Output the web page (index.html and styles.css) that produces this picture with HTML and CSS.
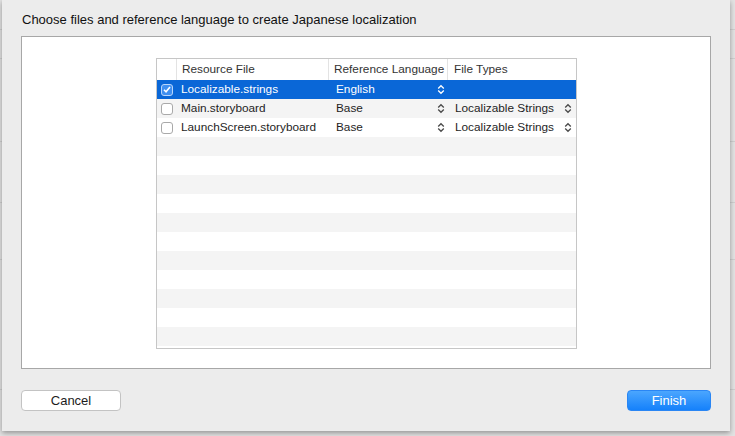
FILE: index.html
```html
<!DOCTYPE html>
<html>
<head>
<meta charset="utf-8">
<link rel="stylesheet" href="styles.css">
</head>
<body>
<div class="sheet">
  <div class="title">Choose files and reference language to create Japanese localization</div>
  <div class="panel">
    <div class="table">
      <div class="thead">
        <div class="th"></div>
        <div class="th">Resource File</div>
        <div class="th">Reference Language</div>
        <div class="th">File Types</div>
      </div>
      <div class="tbody">
        <div class="row selected">
          <div class="cell cb"><span class="check on"><svg width="8" height="7" viewBox="0 0 8 7"><path d="M1 3.8 L3 5.8 L7 1" fill="none" stroke="#fff" stroke-width="1.6"/></svg></span></div>
          <div class="cell name">Localizable.strings</div>
          <div class="cell pop">English<svg class="chev" width="8" height="11" viewBox="0 0 8 11"><path d="M1.2 4.5 L4 1.7 L6.8 4.5 M1.2 6.5 L4 9.3 L6.8 6.5" fill="none" stroke="currentColor" stroke-width="1.3"/></svg></div>
          <div class="cell pop"></div>
        </div>
        <div class="row">
          <div class="cell cb"><span class="check"></span></div>
          <div class="cell name">Main.storyboard</div>
          <div class="cell pop">Base<svg class="chev" width="8" height="11" viewBox="0 0 8 11"><path d="M1.2 4.5 L4 1.7 L6.8 4.5 M1.2 6.5 L4 9.3 L6.8 6.5" fill="none" stroke="currentColor" stroke-width="1.3"/></svg></div>
          <div class="cell pop">Localizable Strings<svg class="chev" width="8" height="11" viewBox="0 0 8 11"><path d="M1.2 4.5 L4 1.7 L6.8 4.5 M1.2 6.5 L4 9.3 L6.8 6.5" fill="none" stroke="currentColor" stroke-width="1.3"/></svg></div>
        </div>
        <div class="row">
          <div class="cell cb"><span class="check"></span></div>
          <div class="cell name">LaunchScreen.storyboard</div>
          <div class="cell pop">Base<svg class="chev" width="8" height="11" viewBox="0 0 8 11"><path d="M1.2 4.5 L4 1.7 L6.8 4.5 M1.2 6.5 L4 9.3 L6.8 6.5" fill="none" stroke="currentColor" stroke-width="1.3"/></svg></div>
          <div class="cell pop">Localizable Strings<svg class="chev" width="8" height="11" viewBox="0 0 8 11"><path d="M1.2 4.5 L4 1.7 L6.8 4.5 M1.2 6.5 L4 9.3 L6.8 6.5" fill="none" stroke="currentColor" stroke-width="1.3"/></svg></div>
        </div>
        <div class="row"></div>
        <div class="row"></div>
        <div class="row"></div>
        <div class="row"></div>
        <div class="row"></div>
        <div class="row"></div>
        <div class="row"></div>
        <div class="row"></div>
        <div class="row"></div>
        <div class="row"></div>
        <div class="row"></div>
        <div class="row"></div>
      </div>
    </div>
  </div>
  <div class="buttons">
    <button class="btn cancel">Cancel</button>
    <button class="btn finish">Finish</button>
  </div>
</div>
</body>
</html>
```

FILE: styles.css
```css
html, body {
  margin: 0;
  padding: 0;
}
body {
  width: 735px;
  height: 436px;
  overflow: hidden;
  font-family: "Liberation Sans", Arial, sans-serif;
  background-color: #e2e2e2;
  background-image:
    linear-gradient(#cfcfcf, #cfcfcf),
    linear-gradient(#cfcfcf, #cfcfcf),
    linear-gradient(#cfcfcf, #cfcfcf),
    linear-gradient(#cfcfcf, #cfcfcf),
    linear-gradient(#cfcfcf, #cfcfcf),
    linear-gradient(#cfcfcf, #cfcfcf);
  background-size: 100% 1px;
  background-repeat: no-repeat;
  background-position: 0 29px, 0 58px, 0 141px, 0 202px, 0 259px, 0 389px;
}
.sheet {
  margin-left: 2px;
  width: 728px;
  height: 431px;
  background: #ececec;
  box-shadow: 0 2px 5px rgba(0, 0, 0, 0.35);
  display: flex;
  flex-direction: column;
  padding: 0 19px;
  box-sizing: border-box;
}
.title {
  font-size: 13px;
  line-height: 16px;
  color: #111;
  padding: 12px 0 8px 1px;
}
.panel {
  height: 333px;
  box-sizing: border-box;
  border: 1px solid #a7a7a7;
  background: #fff;
  display: flex;
  justify-content: center;
  padding-top: 21px;
}
.table {
  width: 421px;
  height: 291px;
  box-sizing: border-box;
  border: 1px solid #c6c6c6;
  overflow: hidden;
  display: flex;
  flex-direction: column;
  margin-left: 1px;
}
.thead, .row {
  display: grid;
  grid-template-columns: 20px 152px 119px 127px;
}
.thead {
  height: 21px;
  flex: none;
}
.th {
  font-size: 11.8px;
  color: #333;
  line-height: 20px;
  padding-left: 5px;
  border-right: 1px solid #e3e3e3;
  white-space: nowrap;
  overflow: hidden;
}
.th:last-child {
  border-right: none;
  padding-left: 6px;
}
.tbody {
  flex: 1;
  overflow: hidden;
}
.row {
  height: 19px;
  font-size: 11.8px;
  color: #1e1e1e;
}
.row:nth-child(even) {
  background: #f4f4f4;
}
.row.selected {
  background: #0a67d7;
  color: #fff;
}
.cell {
  display: flex;
  align-items: center;
  line-height: 19px;
  white-space: nowrap;
}
.cb {
  padding-left: 4px;
}
.name {
  padding-left: 4px;
}
.pop {
  padding: 0 3px 0 7px;
  justify-content: space-between;
}
.pop .chev {
  color: #4a4a4a;
}
.selected .pop .chev {
  color: #fff;
}
.check {
  width: 12px;
  height: 12px;
  box-sizing: border-box;
  border: 1px solid #a9a9a9;
  border-radius: 3px;
  background: #fff;
  display: flex;
  align-items: center;
  justify-content: center;
}
.check.on {
  background: #3f8ff0;
  border-color: #b9d6fb;
}
.buttons {
  display: flex;
  justify-content: space-between;
  margin-top: 21px;
}
.btn {
  height: 21px;
  box-sizing: border-box;
  font-family: "Liberation Sans", Arial, sans-serif;
  font-size: 13px;
  border-radius: 4px;
  padding: 0;
}
.cancel {
  width: 100px;
  background: #fff;
  border: 1px solid #c3c3c3;
  color: #1c1c1c;
}
.finish {
  width: 84px;
  background: linear-gradient(#4ba6fe, #1581fb);
  border: 1px solid #2a86f4;
  color: #fff;
}
```
